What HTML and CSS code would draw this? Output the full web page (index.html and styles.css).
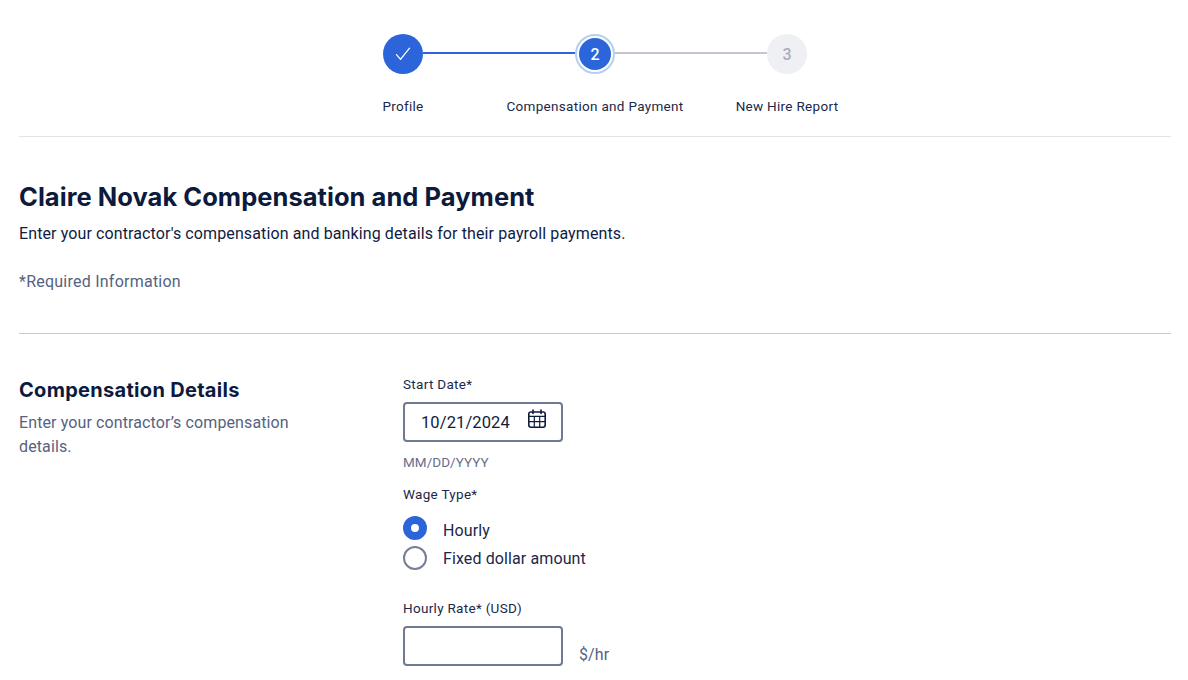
FILE: index.html
```html
<!DOCTYPE html>
<html lang="en">
<head>
<meta charset="utf-8">
<title>Compensation and Payment</title>
<link rel="stylesheet" href="styles.css">
</head>
<body>
<main class="page">
  <nav class="stepper">
    <div class="track">
      <span class="dot dot-done">
        <svg width="16" height="16" viewBox="0 0 16 16" fill="none" stroke="#fff" stroke-width="1.3" stroke-linecap="round" stroke-linejoin="round"><path d="M1.5 8.6 5.5 13.4 14.5 2.2"/></svg>
      </span>
      <span class="line line-done"></span>
      <span class="dot-ring"><span class="dot-current">2</span></span>
      <span class="line line-todo"></span>
      <span class="dot dot-todo">3</span>
    </div>
    <div class="step-labels">
      <span>Profile</span>
      <span>Compensation and Payment</span>
      <span>New Hire Report</span>
    </div>
  </nav>

  <header class="intro">
    <h1>Claire Novak Compensation and Payment</h1>
    <p class="lead">Enter your contractor's compensation and banking details for their payroll payments.</p>
    <p class="required">*Required Information</p>
  </header>

  <section class="section">
    <div class="section-info">
      <h2>Compensation Details</h2>
      <p>Enter your contractor’s compensation details.</p>
    </div>
    <div class="fields">
      <label class="label label-date">Start Date*</label>
      <div class="input input-date">
        <span class="date-value">10/21/2024</span>
        <svg class="cal" width="20" height="20" viewBox="0 0 20 20" fill="none" stroke="#0f1c3f" stroke-width="1.6"><rect x="1.8" y="3" width="16.4" height="15.2" rx="2.2"/><path d="M1.8 7.4h16.4M1.8 12.6h16.4M7.3 7.4v10.8M12.7 7.4v10.8" stroke-width="1.2"/><path d="M6 1v3.4M14 1v3.4" stroke-linecap="round"/></svg>
      </div>
      <div class="hint">MM/DD/YYYY</div>
      <div class="label label-wage">Wage Type*</div>
      <div class="radios">
        <div class="radio-row"><span class="radio radio-on"></span><span class="radio-text-low">Hourly</span></div>
        <div class="radio-row"><span class="radio"></span><span>Fixed dollar amount</span></div>
      </div>
      <label class="label label-rate">Hourly Rate* (USD)</label>
      <div class="rate-row">
        <div class="input"></div>
        <span class="unit">$/hr</span>
      </div>
    </div>
  </section>
</main>
</body>
</html>
```
FILE: styles.css
```css
* { box-sizing: border-box; }
html, body { margin: 0; height: 100%; overflow: hidden; background: #fff; }
body {
  font-family: "Roboto", "Liberation Sans", sans-serif;
  color: #0f1c3f;
}
.page { padding: 34px 17px 0 19px; }

.stepper { display: flex; flex-direction: column; align-items: center; border-bottom: 1px solid #e3e4ea; height: 103px; }
.track { display: flex; align-items: center; width: 424px; height: 40px; }
.dot { flex: none; width: 40px; height: 40px; border-radius: 50%; display: flex; align-items: center; justify-content: center; font-size: 16px; font-weight: 500; }
.dot-done { background: #2b65d9; }
.dot-todo { background: #eff0f3; color: #a8adbb; }
.dot-ring { flex: none; width: 40px; height: 40px; border-radius: 50%; border: 2px solid #b3d0f2; padding: 2px; }
.dot-current { display: flex; align-items: center; justify-content: center; width: 100%; height: 100%; border-radius: 50%; background: #2b65d9; color: #fff; font-size: 16px; font-weight: 500; }
.line { flex: 1; height: 2px; margin-top: -2px; }
.line-done { background: #2b65d9; }
.line-todo { background: #c3c6d1; }
.step-labels { display: grid; grid-template-columns: repeat(3, 192px); margin-top: 23px; font-size: 13.5px; line-height: 18px; letter-spacing: .3px; color: #1b2849; text-align: center; white-space: nowrap; }

.intro { height: 197px; border-bottom: 1px solid #c9cbd4; padding-top: 44px; }
h1 { margin: 0; font-family: "Inter", sans-serif; font-size: 25.5px; line-height: 32px; font-weight: 700; letter-spacing: .04px; color: #0c1a3d; }
.lead { margin: 9px 0 0; font-size: 16px; line-height: 24px; letter-spacing: .11px; color: #0f1c3f; }
.required { margin: 24px 0 0; font-size: 16px; line-height: 24px; letter-spacing: .24px; color: #56627f; }

.section { display: grid; grid-template-columns: 384px 1fr; padding-top: 42px; }
.section-info h2 { margin: 0; font-family: "Inter", sans-serif; font-size: 20px; line-height: 28px; font-weight: 700; letter-spacing: .3px; color: #0c1a3d; }
.section-info p { margin: 7px 0 0; width: 290px; font-size: 16px; line-height: 24px; letter-spacing: .11px; color: #56627f; }

.fields { display: flex; flex-direction: column; margin-top: -1px; }
.label { font-size: 13.5px; line-height: 18px; letter-spacing: .3px; color: #1b2849; display: block; }
.input { width: 160px; height: 40px; border: 2px solid #6e7a91; border-radius: 4px; background: #fff; }
.input-date { margin-top: 9px; display: flex; align-items: center; justify-content: space-between; padding: 0 14px 0 16px; }
.date-value { font-size: 16.5px; letter-spacing: .1px; color: #0f1c3f; }
.cal { margin-top: -7px; }
.hint { margin-top: 11px; font-size: 13.5px; line-height: 18px; letter-spacing: .05px; color: #65718b; }
.label-wage { margin-top: 14px; }
.radios { margin-top: 13px; display: flex; flex-direction: column; gap: 6px; }
.radio-row { display: flex; align-items: center; gap: 16px; height: 24px; font-size: 16px; letter-spacing: .11px; color: #1b2849; }
.radio-text-low { padding-top: 4px; }
.radio { flex: none; width: 24px; height: 24px; border-radius: 50%; border: 2px solid #767f96; background: #fff; }
.radio-on { border: 8px solid #2b65d9; }
.label-rate { margin-top: 29px; }
.rate-row { margin-top: 9px; display: flex; align-items: flex-end; gap: 16px; }
.unit { font-size: 16px; line-height: 24px; letter-spacing: .1px; color: #56627f; margin-bottom: -1px; }
```
